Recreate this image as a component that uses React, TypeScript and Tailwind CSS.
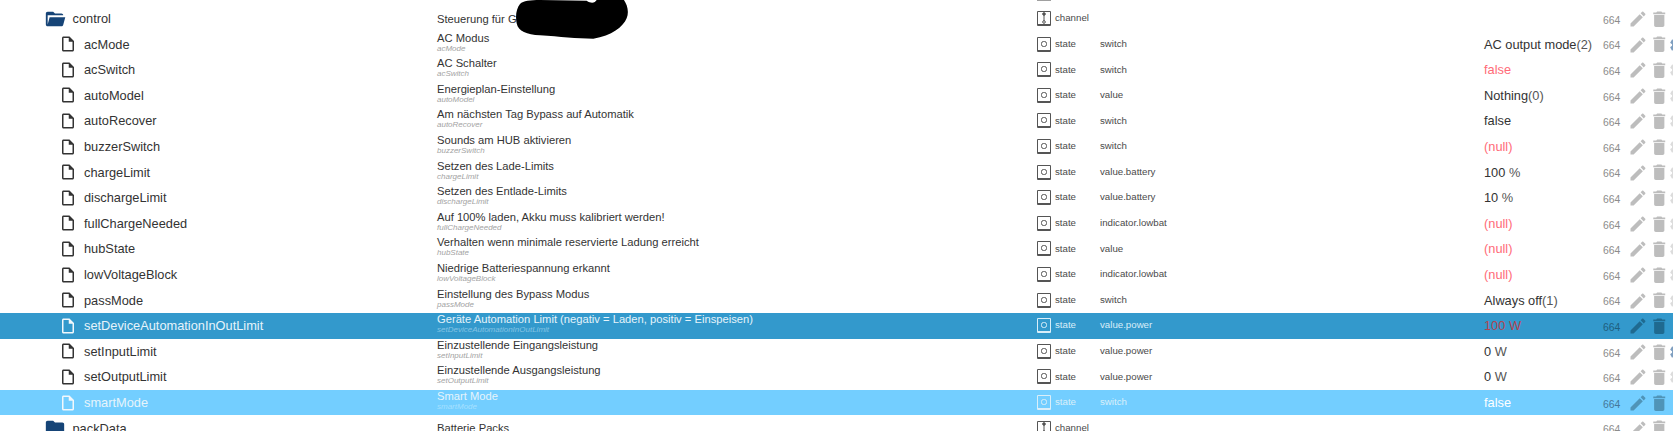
type Row = {
  name: string
  title: string
  sub?: string
  kind: 'channel' | 'state'
  role?: string
  value?: string
  paren?: string
  tone?: 'red'
  select?: 'dark' | 'light'
  folder?: 'open' | 'closed'
  cog?: 'blue' | 'faint'
}

const rows: Row[] = [
  { name: 'control', title: 'Steuerung für G', kind: 'channel', folder: 'open' },
  { name: 'acMode', title: 'AC Modus', sub: 'acMode', kind: 'state', role: 'switch', value: 'AC output mode', paren: '(2)', cog: 'blue' },
  { name: 'acSwitch', title: 'AC Schalter', sub: 'acSwitch', kind: 'state', role: 'switch', value: 'false', tone: 'red', cog: 'faint' },
  { name: 'autoModel', title: 'Energieplan-Einstellung', sub: 'autoModel', kind: 'state', role: 'value', value: 'Nothing', paren: '(0)', cog: 'faint' },
  { name: 'autoRecover', title: 'Am nächsten Tag Bypass auf Automatik', sub: 'autoRecover', kind: 'state', role: 'switch', value: 'false', cog: 'faint' },
  { name: 'buzzerSwitch', title: 'Sounds am HUB aktivieren', sub: 'buzzerSwitch', kind: 'state', role: 'switch', value: '(null)', tone: 'red', cog: 'faint' },
  { name: 'chargeLimit', title: 'Setzen des Lade-Limits', sub: 'chargeLimit', kind: 'state', role: 'value.battery', value: '100', paren: ' %', cog: 'faint' },
  { name: 'dischargeLimit', title: 'Setzen des Entlade-Limits', sub: 'dischargeLimit', kind: 'state', role: 'value.battery', value: '10', paren: ' %', cog: 'faint' },
  { name: 'fullChargeNeeded', title: 'Auf 100% laden, Akku muss kalibriert werden!', sub: 'fullChargeNeeded', kind: 'state', role: 'indicator.lowbat', value: '(null)', tone: 'red', cog: 'faint' },
  { name: 'hubState', title: 'Verhalten wenn minimale reservierte Ladung erreicht', sub: 'hubState', kind: 'state', role: 'value', value: '(null)', tone: 'red', cog: 'faint' },
  { name: 'lowVoltageBlock', title: 'Niedrige Batteriespannung erkannt', sub: 'lowVoltageBlock', kind: 'state', role: 'indicator.lowbat', value: '(null)', tone: 'red', cog: 'faint' },
  { name: 'passMode', title: 'Einstellung des Bypass Modus', sub: 'passMode', kind: 'state', role: 'switch', value: 'Always off', paren: '(1)', cog: 'faint' },
  { name: 'setDeviceAutomationInOutLimit', title: 'Geräte Automation Limit (negativ = Laden, positiv = Einspeisen)', sub: 'setDeviceAutomationInOutLimit', kind: 'state', role: 'value.power', value: '100', paren: ' W', tone: 'red', select: 'dark' },
  { name: 'setInputLimit', title: 'Einzustellende Eingangsleistung', sub: 'setInputLimit', kind: 'state', role: 'value.power', value: '0', paren: ' W', cog: 'blue' },
  { name: 'setOutputLimit', title: 'Einzustellende Ausgangsleistung', sub: 'setOutputLimit', kind: 'state', role: 'value.power', value: '0', paren: ' W', cog: 'faint' },
  { name: 'smartMode', title: 'Smart Mode', sub: 'smartMode', kind: 'state', role: 'switch', value: 'false', select: 'light' },
  { name: 'packData', title: 'Batterie Packs', kind: 'channel', folder: 'closed' },
]

function FolderIcon({ open }: { open: boolean }) {
  return (
    <svg viewBox="0 0 24 24" className="h-[22px] w-[22px] fill-[#164477]">
      {open ? (
        <path d="M19 20H4c-1.1 0-2-.9-2-2V6c0-1.1.9-2 2-2h6l2 2h7c1.1 0 2 .9 2 2H4v10l2.14-8h17.07l-2.28 8.5c-.23.87-1.01 1.5-1.93 1.5z" />
      ) : (
        <path d="M10 4H4c-1.1 0-2 .9-2 2v12c0 1.1.9 2 2 2h16c1.1 0 2-.9 2-2V8c0-1.1-.9-2-2-2h-8l-2-2z" />
      )}
    </svg>
  )
}

function FileIcon() {
  return (
    <svg viewBox="0 0 24 24" className="h-[18px] w-[18px] fill-current">
      <path d="M14 2H6c-1.1 0-2 .9-2 2v16c0 1.1.9 2 2 2h12c1.1 0 2-.9 2-2V8l-6-6zm4 18H6V4h7v5h5v11z" />
    </svg>
  )
}

function KindIcon({ kind }: { kind: Row['kind'] }) {
  return (
    <span className="ml-[1px] flex h-[15px] w-[14px] items-center justify-center rounded-[1px] border border-b-2 border-current">
      {kind === 'state' ? (
        <span className="h-[6px] w-[6px] rounded-[2.5px] border border-current" />
      ) : (
        <svg viewBox="0 0 8 12" className="h-[12px] w-[8px] fill-none stroke-current">
          <circle cx="4" cy="2" r="1.3" className="fill-current" />
          <path d="M4 3v6" />
          <circle cx="4" cy="10" r="1.3" />
        </svg>
      )}
    </span>
  )
}

function PencilIcon() {
  return (
    <svg viewBox="0 0 24 24" className="h-[20px] w-[20px] shrink-0 fill-current">
      <path d="M3 17.25V21h3.75L17.81 9.94l-3.75-3.75L3 17.25zM20.71 7.04c.39-.39.39-1.02 0-1.41l-2.34-2.34c-.39-.39-1.02-.39-1.41 0l-1.83 1.83 3.75 3.75 1.83-1.83z" />
    </svg>
  )
}

function TrashIcon() {
  return (
    <svg viewBox="0 0 24 24" className="ml-[1px] h-[20.5px] w-[20.5px] shrink-0 fill-current">
      <path d="M6 19c0 1.1.9 2 2 2h8c1.1 0 2-.9 2-2V7H6v12zM19 4h-3.5l-1-1h-5l-1 1H5v2h14V4z" />
    </svg>
  )
}

function CogIcon({ tone }: { tone: 'blue' | 'faint' }) {
  return (
    <svg
      viewBox="0 0 24 24"
      className={`-ml-[1.5px] h-[20px] w-[20px] shrink-0 fill-current ${tone === 'blue' ? 'text-[#7f9fc0]' : 'text-[#dcdcdc]'}`}
    >
      <path d="M19.14 12.94c.04-.3.06-.61.06-.94s-.02-.64-.07-.94l2.03-1.58a.5.5 0 0 0 .12-.61l-1.92-3.32a.5.5 0 0 0-.59-.22l-2.39.96a7 7 0 0 0-1.62-.94l-.36-2.54a.48.48 0 0 0-.48-.41h-3.84a.47.47 0 0 0-.47.41l-.36 2.54a7.3 7.3 0 0 0-1.62.94l-2.39-.96a.49.49 0 0 0-.59.22L2.74 8.87a.48.48 0 0 0 .12.61l2.03 1.58c-.05.3-.09.63-.09.94s.02.64.07.94l-2.03 1.58a.5.5 0 0 0-.12.61l1.92 3.32c.12.22.37.29.59.22l2.39-.96c.5.38 1.03.7 1.62.94l.36 2.54c.05.24.24.41.48.41h3.84c.24 0 .44-.17.47-.41l.36-2.54a6.9 6.9 0 0 0 1.62-.94l2.39.96c.22.08.47 0 .59-.22l1.92-3.32a.48.48 0 0 0-.12-.61l-2.01-1.58zM12 15.6A3.6 3.6 0 1 1 12 8.4a3.6 3.6 0 0 1 0 7.2z" />
    </svg>
  )
}

function TableRow({ row }: { row: Row }) {
  const dark = row.select === 'dark'
  const light = row.select === 'light'
  const selected = dark || light
  const bg = dark ? 'bg-[#3399cc]' : light ? 'bg-[#73ceff]' : 'bg-white'
  const main = selected ? 'text-[#e6f4fb]' : 'text-[#333333]'
  const sub = dark ? 'text-[#85c4e4]' : light ? 'text-[#a5e0ff]' : 'text-[#a3a3a3]'
  const muted = selected ? 'text-[#d9eef9]' : 'text-[#4a4a4a]'
  const valueColor = row.tone === 'red' ? (dark ? 'text-[#b4434f]' : 'text-[#ff6b78]') : light ? 'text-white' : 'text-[#333333]'
  const parenColor = row.tone === 'red' ? valueColor : light ? 'text-white' : 'text-[#555555]'
  const acl = dark ? 'text-[#1f5f80]' : light ? 'text-[#45779a]' : 'text-[#8c8c8c]'
  const action = dark ? 'text-[#1f6a90]' : light ? 'text-[#4f94b8]' : 'text-[#bdbdbd]'

  return (
    <div className={`flex h-[25.6px] items-center ${bg}`}>
      <div className={`flex w-[437px] shrink-0 items-center text-[12.8px] ${main}`}>
        {row.folder ? (
          <span className="ml-[44px] flex items-center">
            <FolderIcon open={row.folder === 'open'} />
            <span className="ml-[6.5px]">{row.name}</span>
          </span>
        ) : (
          <span className="ml-[59px] flex items-center">
            <span className={selected ? 'text-[#f2f8fc]' : 'text-[#333333]'}>
              <FileIcon />
            </span>
            <span className="ml-[7px]">{row.name}</span>
          </span>
        )}
      </div>
      <div className={`w-[599px] shrink-0 ${row.sub ? 'mb-[3px]' : ''} ${main}`}>
        <div className="text-[11.2px] leading-[12px]">{row.title}</div>
        {row.sub && <div className={`text-[8px] italic leading-[10px] ${sub}`}>{row.sub}</div>}
      </div>
      <div className={`flex w-[64px] shrink-0 items-center gap-[4px] text-[9.7px] ${muted}`}>
        <span className={selected ? 'text-[#d9eef9]' : 'text-[#555555]'}>
          <KindIcon kind={row.kind} />
        </span>
        {row.kind}
      </div>
      <div className={`w-[384px] shrink-0 text-[9.7px] ${muted}`}>{row.role}</div>
      <div className={`w-[119px] shrink-0 text-[12.8px] ${valueColor}`}>
        {row.value}
        {row.paren && <span className={parenColor}>{row.paren}</span>}
      </div>
      <div className={`mt-[4px] w-[24.5px] shrink-0 text-[10.4px] ${acl}`}>664</div>
      <div className={`mt-[1px] flex shrink-0 items-center ${action}`}>
        <PencilIcon />
        <TrashIcon />
        {row.cog && <CogIcon tone={row.cog} />}
      </div>
    </div>
  )
}

export default function App() {
  return (
    <div className="relative h-[431px] w-[1673px] overflow-hidden bg-white font-['Liberation_Sans',Arial,sans-serif]">
      {/* bottom edge of the row scrolled off above */}
      <div className="h-[5.8px] pl-[1037px]">
        <div className="h-[1px] w-[14px] bg-[#a0a0a0]" />
      </div>
      {rows.map((row) => (
        <TableRow key={row.name} row={row} />
      ))}
      {/* scribbled-out part of the description */}
      <svg viewBox="288 0 340 120" className="absolute left-[516px] top-0 h-[40px] w-[113.3px] fill-black">
        <path d="M300 12C310 2 330 0 360 0L500 2C515 12 525 8 530 0L612 0C622 15 628 35 620 55C610 80 575 108 520 116C470 116 420 110 360 106C320 104 295 95 290 70C285 45 290 25 300 12Z" />
      </svg>
    </div>
  )
}
